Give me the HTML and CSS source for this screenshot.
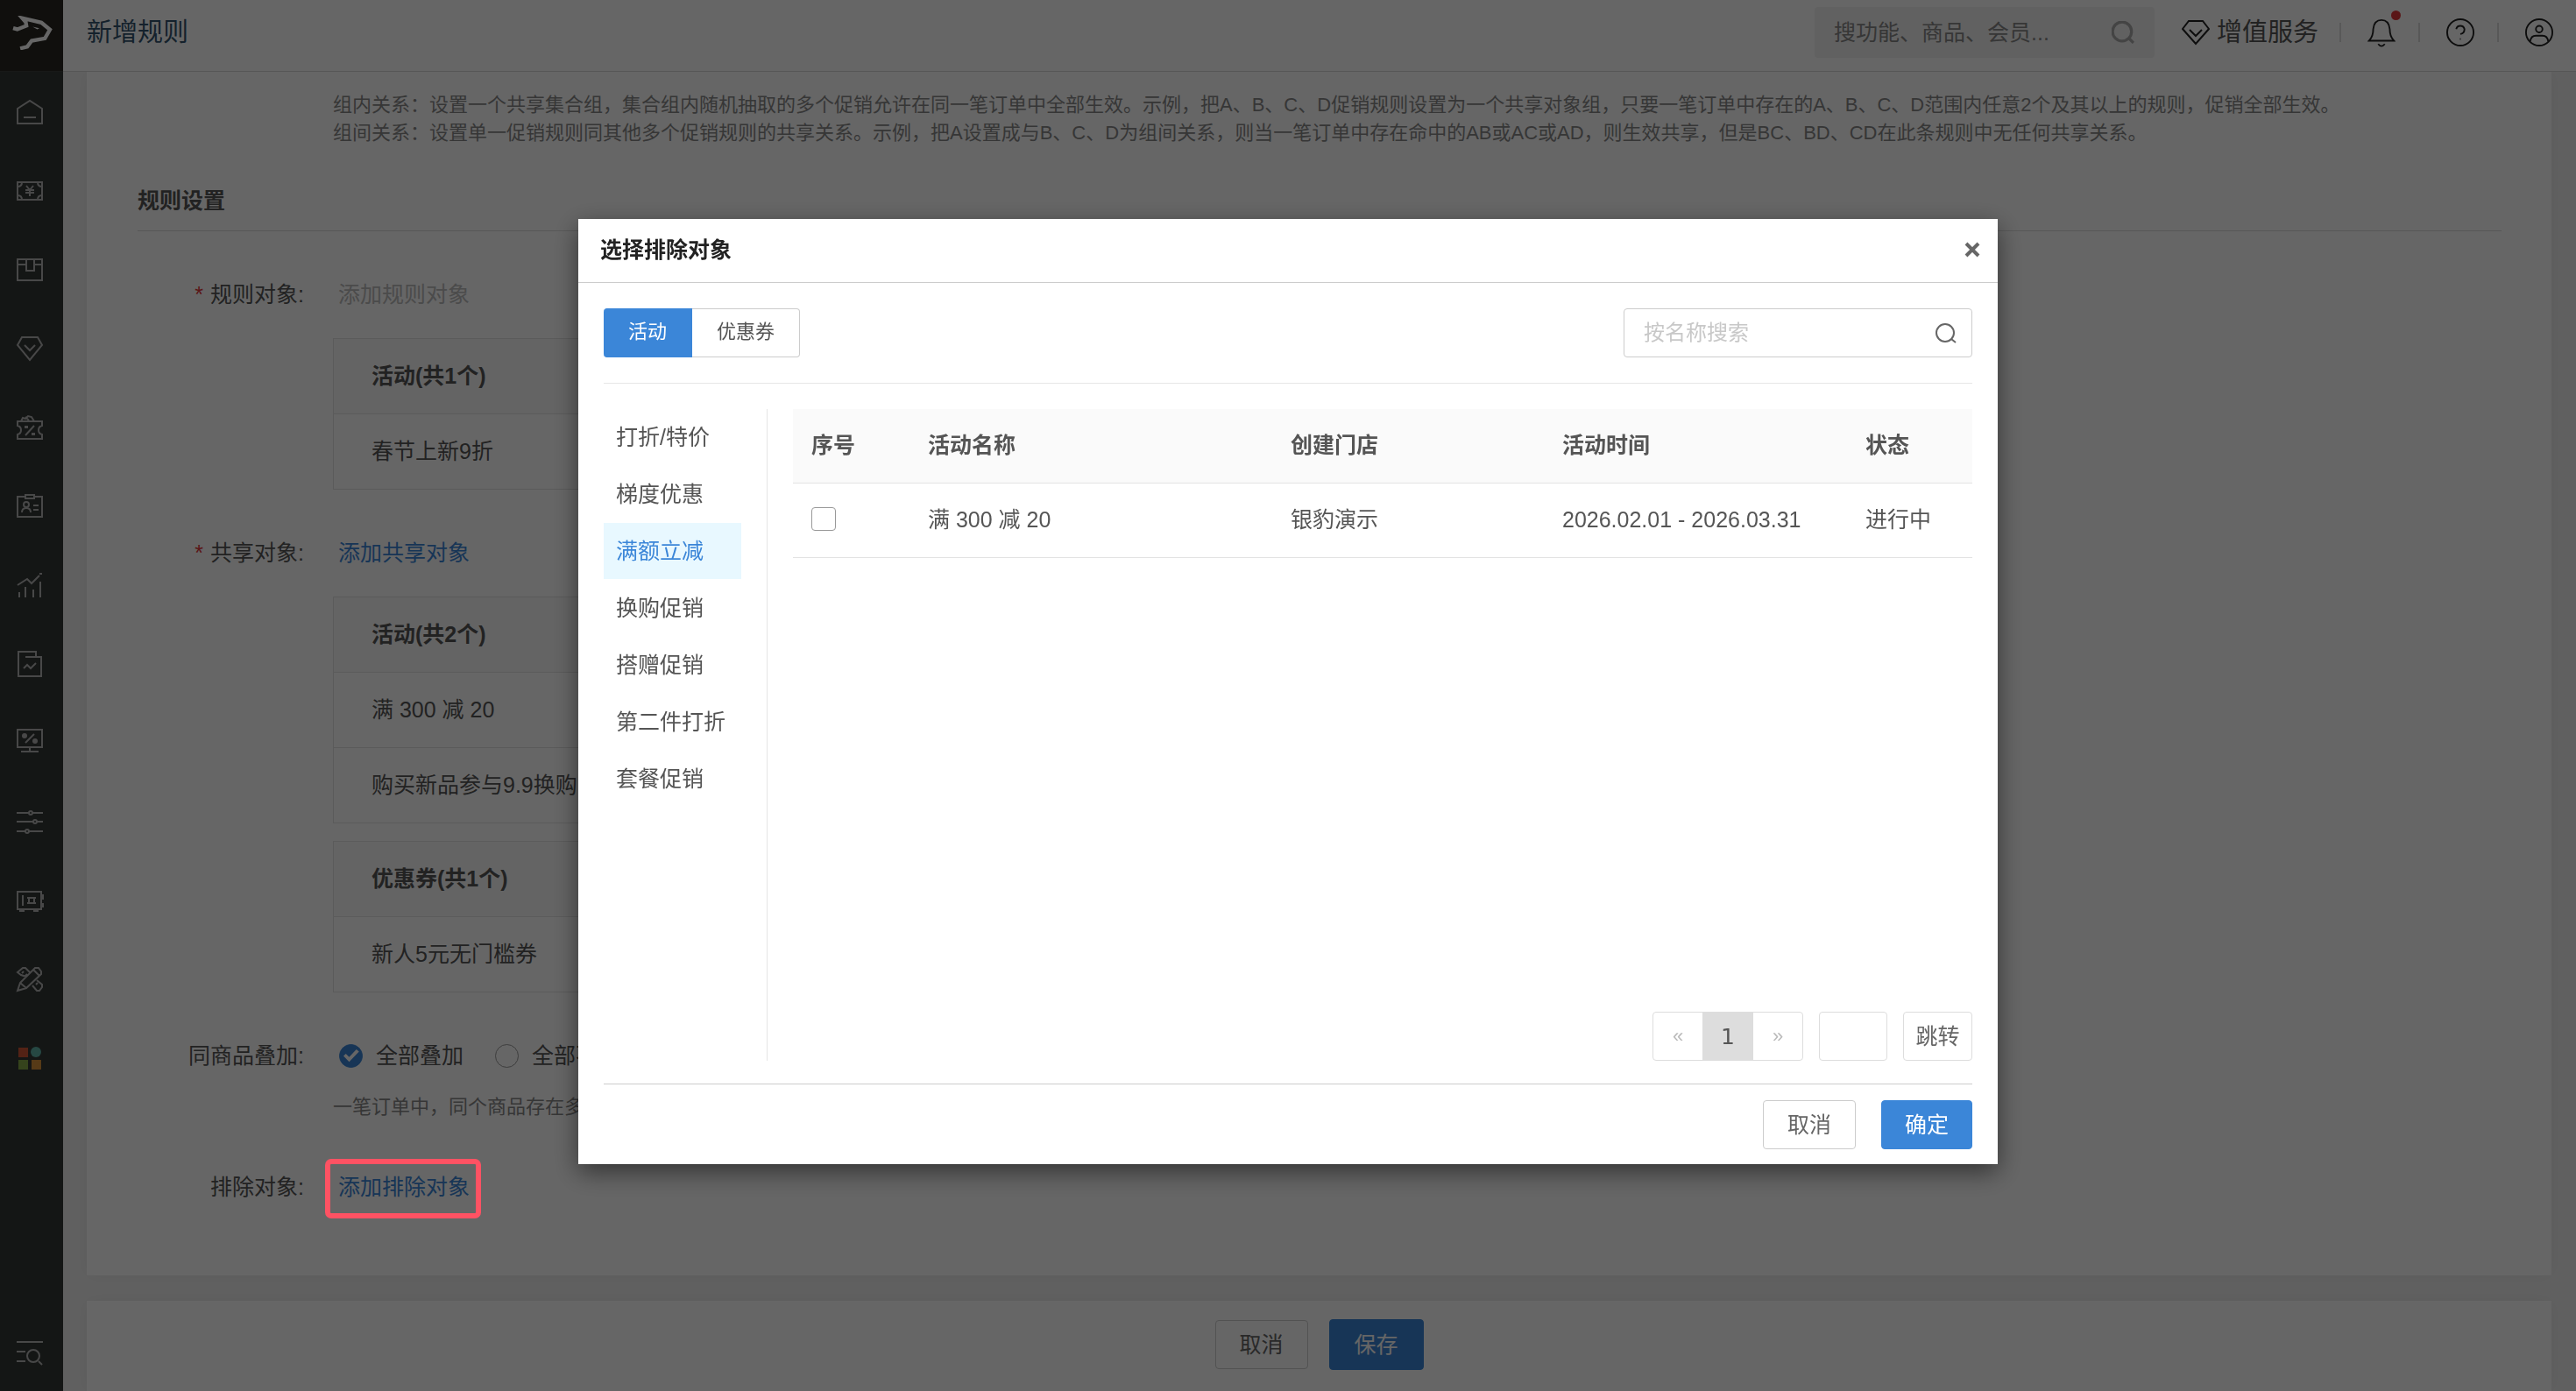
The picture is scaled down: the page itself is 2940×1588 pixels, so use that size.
FILE: index.html
```html
<!DOCTYPE html>
<html lang="zh-CN">
<head>
<meta charset="utf-8">
<title>新增规则</title>
<link rel="stylesheet" href="styles.css">
</head>
<body>
<div class="app">
  <nav class="sidebar" aria-label="主导航">
    <a class="logo" href="#" aria-label="首页">
      <svg viewBox="36 56 140 116" width="47" height="39"><path d="M42 98 56 102 87 90 85 78 73 64 138 79 167 103 150 133 105 141 90 161 66 167" fill="none" stroke="#fff" stroke-width="13"/><path d="M108 93 131 98 124 102Z" fill="#fff"/></svg>
    </a>
    <a class="side-link" href="#" aria-label="概览"><svg class="icon" viewBox="0 0 30 30"><path d="M1 28V11L15 2l14 9v17zM8 21h14"/></svg></a>
    <a class="side-link" href="#" aria-label="收银"><svg class="icon" viewBox="0 0 30 30"><path d="M1 5h28v20H1zM1 10q5 0 5-5M24 5q0 5 5 5M1 20q5 0 5 5M24 25q0-5 5-5M11 9l4 5 4-5M15 14v7M10 14h10M10 17h10"/></svg></a>
    <a class="side-link" href="#" aria-label="商品"><svg class="icon" viewBox="0 0 30 30"><path d="M1 3h28v24H1zM1 9h10M19 9h10M11 3v13h9V3"/></svg></a>
    <a class="side-link" href="#" aria-label="会员"><svg class="icon" viewBox="0 0 30 30"><path d="M6 2h18l5 9-14 17L1 11zM9 11l6 6 6-6"/></svg></a>
    <a class="side-link" href="#" aria-label="营销"><svg class="icon" viewBox="0 0 30 30"><path d="M1 8h28v5q-4 1-4 5t4 5v5H1v-5q4-1 4-5t-4-5zM5 8l2-4 3 1 3-3 4 1 3 5M10 3l4 4M10 24l10-11"/><path class="dot" d="M9 13h4v3H9zM17 21h4v3h-4z"/></svg></a>
    <a class="side-link" href="#" aria-label="员工"><svg class="icon" viewBox="0 0 30 30"><path d="M10 4H1v23h28V4h-9M10 2h10v4H10zM6 22q0-5 5-5t5 5M19 14h6M19 19h6"/><circle cx="11" cy="13" r="3"/></svg></a>
    <a class="side-link" href="#" aria-label="数据"><svg class="icon" viewBox="0 0 30 30"><path d="M1 15l11-7 5 5 9-9M26 2h3M3 23v6M10 17v12M19 20v9M27 11v18"/></svg></a>
    <a class="side-link" href="#" aria-label="报表"><svg class="icon" viewBox="0 0 30 30"><path d="M22 7V1H2v28h26V7H10M8 20l4-4 4 4 6-6"/></svg></a>
    <a class="side-link" href="#" aria-label="收银端"><svg class="icon" viewBox="0 0 30 30"><path d="M1 0h28v20H1zM15 20v4M5 25h20M10 15L20 5"/><circle class="dot" cx="9" cy="7" r="3"/><circle class="dot" cx="21" cy="13" r="3"/></svg></a>
    <a class="side-link" href="#" aria-label="设置"><svg class="icon" viewBox="0 0 30 30"><path d="M0 5h14M18 5h12M0 15h19M23 15h7M0 26h10M14 26h16"/><circle cx="16" cy="5" r="2"/><circle cx="21" cy="15" r="2"/><circle cx="12" cy="26" r="2"/></svg></a>
    <a class="side-link" href="#" aria-label="资金"><svg class="icon" viewBox="0 0 30 30"><path d="M1 5h27v20H1zM7 9v12M14 12h6v6h-6zM12 12h10M12 18h10M28 9h2v4h-2M28 19h2v4M4 25v2h4v-2M20 25v2h4v-2"/></svg></a>
    <a class="side-link" href="#" aria-label="工具"><svg class="icon" viewBox="0 0 30 30"><path d="M1 28l3-9L21 2h4l3 4v3L11 25zM4 19l7 6M19 4l7 7M11 12L5 10 1 7l6-5h3l5 5M8 6L6 8M12 9l-2 2M18 22l5 6h3l3-4v-3l-6-5M24 19l-2 2"/></svg></a>
    <a class="side-link" href="#" aria-label="应用"><svg width="30" height="30" viewBox="0 0 30 30"><path fill="#cf5536" d="M2 3h11v11H2z"/><circle cx="22" cy="8" r="6" fill="#5fb3a8"/><path fill="#86a948" d="M2 17h11v11H2z"/><path fill="#d6913a" d="M17 17h11v11H17z"/></svg></a>
    <a class="side-link side-search" href="#" aria-label="搜索菜单"><svg class="icon" viewBox="0 0 30 30"><path d="M0 3h30M0 14h10M0 25h10M25 25l4 4"/><circle cx="19" cy="19" r="7"/></svg></a>
  </nav>

  <div class="page">
    <header class="topbar">
      <h1 class="page-title">新增规则</h1>
      <div class="global-search">
        <input type="text" aria-label="全局搜索" placeholder="搜功能、商品、会员...">
        <svg class="search-icon" viewBox="0 0 24 24"><circle cx="11" cy="11" r="10"/><path d="M18 18l5 5"/></svg>
      </div>
      <a class="service" href="#">
        <svg class="top-icon" viewBox="0 0 32 32"><path d="M8 3h16l7 9-15 17L1 12zM9 13l7 7 7-7"/></svg>
        增值服务
      </a>
      <div class="top-actions">
        <button class="top-button" type="button" aria-label="通知">
          <svg class="top-icon" viewBox="0 0 32 36"><path d="M1 28q5-5 5-14Q7 3 16 3t10 11q0 9 5 14zM12 32q4 5 8 0"/></svg>
          <span class="badge"></span>
        </button>
        <button class="top-button" type="button" aria-label="帮助"><svg class="top-icon" viewBox="0 0 34 34"><circle cx="17" cy="17" r="16"/><path d="M12 13q1-4 5-4t5 4q0 5-5 6"/><path d="M17 24v2" stroke-width="1"/></svg></button>
        <button class="top-button" type="button" aria-label="账户"><svg class="top-icon" viewBox="0 0 34 34"><circle cx="17" cy="17" r="16"/><circle cx="17" cy="13" r="4"/><path d="M6 28q1-7 7-7h8q6 0 7 7"/></svg></button>
      </div>
    </header>

    <main class="content">
      <section class="card form-card">
        <p class="help">组内关系：设置一个共享集合组，集合组内随机抽取的多个促销允许在同一笔订单中全部生效。示例，把A、B、C、D促销规则设置为一个共享对象组，只要一笔订单中存在的A、B、C、D范围内任意2个及其以上的规则，促销全部生效。<br>组间关系：设置单一促销规则同其他多个促销规则的共享关系。示例，把A设置成与B、C、D为组间关系，则当一笔订单中存在命中的AB或AC或AD，则生效共享，但是BC、BD、CD在此条规则中无任何共享关系。</p>
        <h2 class="section-title">规则设置</h2>

        <div class="form-row">
          <div class="label"><span class="required">*</span>规则对象:</div>
          <div class="field">
            <a class="pick disabled" href="#">添加规则对象</a>
            <table class="targets">
              <thead><tr><th>活动(共1个)</th></tr></thead>
              <tbody><tr><td>春节上新9折</td></tr></tbody>
            </table>
          </div>
        </div>

        <div class="form-row">
          <div class="label"><span class="required">*</span>共享对象:</div>
          <div class="field">
            <a class="pick" href="#">添加共享对象</a>
            <table class="targets">
              <thead><tr><th>活动(共2个)</th></tr></thead>
              <tbody><tr><td>满 300 减 20</td></tr><tr><td>购买新品参与9.9换购</td></tr></tbody>
            </table>
            <table class="targets">
              <thead><tr><th>优惠券(共1个)</th></tr></thead>
              <tbody><tr><td>新人5元无门槛券</td></tr></tbody>
            </table>
          </div>
        </div>

        <div class="form-row">
          <div class="label">同商品叠加:</div>
          <div class="field">
            <div class="radios">
              <label class="radio"><input type="radio" name="stack" checked>全部叠加</label>
              <label class="radio"><input type="radio" name="stack">全部不叠加</label>
            </div>
            <p class="note">一笔订单中，同个商品存在多个</p>
          </div>
        </div>

        <div class="form-row">
          <div class="label">排除对象:</div>
          <div class="field">
            <a class="pick" href="#">添加排除对象<span class="highlight"></span></a>
          </div>
        </div>
      </section>

      <footer class="card actions">
        <button class="btn" type="button">取消</button>
        <button class="btn primary save" type="button">保存</button>
      </footer>
    </main>
  </div>
</div>

<div class="overlay">
  <div class="modal" role="dialog" aria-modal="true" aria-labelledby="modal-title">
    <header class="modal-head">
      <h2 id="modal-title">选择排除对象</h2>
      <button class="close" type="button" aria-label="关闭"><svg viewBox="0 0 18 18" width="18" height="18"><path d="M2 2l14 14M16 2L2 16" fill="none" stroke="#666" stroke-width="4"/></svg></button>
    </header>
    <div class="toolbar">
      <div class="tabs">
        <button class="tab active" type="button">活动</button>
        <button class="tab" type="button">优惠券</button>
      </div>
      <div class="name-search">
        <input type="text" aria-label="按名称搜索" placeholder="按名称搜索">
        <svg viewBox="0 0 24 24"><circle cx="11" cy="12" r="10"/><path d="M18 19l5 4"/></svg>
      </div>
    </div>
    <div class="modal-body">
      <nav class="types" aria-label="活动类型">
        <a href="#">打折/特价</a>
        <a href="#">梯度优惠</a>
        <a class="active" href="#">满额立减</a>
        <a href="#">换购促销</a>
        <a href="#">搭赠促销</a>
        <a href="#">第二件打折</a>
        <a href="#">套餐促销</a>
      </nav>
      <div class="results">
        <table class="list">
          <colgroup><col class="c-no"><col class="c-name"><col class="c-store"><col class="c-time"><col></colgroup>
          <thead><tr><th>序号</th><th>活动名称</th><th>创建门店</th><th>活动时间</th><th>状态</th></tr></thead>
          <tbody><tr><td><input type="checkbox" aria-label="选择 满 300 减 20"></td><td>满 300 减 20</td><td>银豹演示</td><td>2026.02.01 - 2026.03.31</td><td>进行中</td></tr></tbody>
        </table>
        <div class="pager">
          <div class="pages">
            <button type="button" aria-label="上一页">«</button>
            <button class="current" type="button">1</button>
            <button type="button" aria-label="下一页">»</button>
          </div>
          <input type="text" aria-label="页码">
          <button class="jump" type="button">跳转</button>
        </div>
      </div>
    </div>
    <footer class="modal-foot">
      <button class="btn" type="button">取消</button>
      <button class="btn primary" type="button">确定</button>
    </footer>
  </div>
</div>
</body>
</html>
```

FILE: styles.css
```css
* {
  box-sizing: border-box;
}

body {
  margin: 0;
  background: #f1f1f1;
  color: #555;
  font: 25px/40px "Liberation Sans", "Noto Sans CJK SC", sans-serif;
}

h1, h2, p {
  margin: 0;
}

a {
  color: inherit;
  text-decoration: none;
}

button, input {
  margin: 0;
  font: inherit;
  color: inherit;
}

button {
  padding: 0;
  border: 0;
  background: none;
}

table {
  border-collapse: collapse;
}

th {
  text-align: left;
}

.app {
  display: grid;
  grid-template-columns: 72px minmax(0, 1fr);
  min-height: 100vh;
}

/* sidebar */
.sidebar {
  display: flex;
  flex-direction: column;
  background: #333836;
}

.logo {
  display: flex;
  align-items: center;
  justify-content: center;
  height: 82px;
  padding-bottom: 6px;
  border-bottom: 1px solid #3c403e;
  background: #282622;
}

.side-link {
  display: flex;
  align-items: center;
  justify-content: center;
  height: 90px;
  padding: 2px 4px 0 0;
}

.side-search {
  margin-top: auto;
}

.icon {
  width: 30px;
  height: 30px;
  overflow: visible;
  fill: none;
  stroke: #b4b4b4;
  stroke-width: 2;
}

.icon .dot {
  fill: #b4b4b4;
  stroke: none;
}

/* top bar */
.topbar {
  display: flex;
  align-items: center;
  height: 82px;
  padding: 0 0 8px 27px;
  border-bottom: 1px solid #d8d8d8;
  background: #fff;
}

.page-title {
  margin-right: auto;
  color: #34536e;
  font-size: 29px;
  font-weight: 400;
}

.global-search {
  display: flex;
  align-items: center;
  width: 388px;
  height: 58px;
  padding: 0 23px 0 22px;
  border-radius: 4px;
  background: #f3f3f3;
}

.global-search input {
  flex: 1;
  min-width: 0;
  padding: 0;
  border: 0;
  background: none;
}

.global-search input::placeholder {
  color: #888;
}

.search-icon {
  width: 26px;
  height: 26px;
  fill: none;
  stroke: #aaa;
  stroke-width: 3;
}

.service {
  display: flex;
  align-items: center;
  gap: 8px;
  margin: 0 24px 0 31px;
  font-size: 29px;
}

.top-icon {
  width: 32px;
  height: 34px;
  fill: none;
  stroke: #222;
  stroke-width: 2;
}

.top-actions {
  display: flex;
}

.top-button {
  position: relative;
  display: flex;
  align-items: center;
  justify-content: center;
  width: 90px;
  height: 22px;
  padding-left: 4px;
  border-left: 2px solid #ddd;
}

.badge {
  position: absolute;
  top: -14px;
  right: 20px;
  width: 11px;
  height: 11px;
  border-radius: 50%;
  background: #e2383b;
}

/* form */
.content {
  padding: 0 28px 0 27px;
}

.card {
  background: #fff;
  box-shadow: 0 0 20px rgba(0, 0, 0, .05);
}

.page {
  display: flow-root;
}

.topbar {
  position: relative;
  z-index: 1;
}

.form-card {
  padding: 22px 57px 81px 58px;
}

.help {
  padding-left: 223px;
  color: #888;
  font-size: 22px;
  line-height: 32px;
}

.section-title {
  margin-top: 41px;
  padding-bottom: 14px;
  border-bottom: 1px solid #ddd;
  font-size: 25px;
}

.form-row {
  display: grid;
  grid-template-columns: 190px minmax(0, 1fr);
  gap: 33px;
  margin-top: 52px;
}

.label {
  text-align: right;
}

.required {
  margin-right: 8px;
  color: #e2383b;
}

.pick {
  position: relative;
  display: inline-block;
  margin-left: 6px;
  vertical-align: top;
  color: #3b86d8;
}

.pick.disabled {
  color: #bbb;
}

.highlight {
  position: absolute;
  z-index: 20;
  inset: -12px -13px -16px -15px;
  border: 6px solid #ff5263;
  border-radius: 7px;
}

.targets {
  width: 1200px;
  margin-top: 30px;
  border: 1px solid #e3e3e3;
}

.targets + .targets {
  margin-top: 20px;
}

.targets th,
.targets td {
  height: 86px;
  padding: 0 43px 2px;
  border-top: 1px solid #e3e3e3;
}

.targets th {
  background: #fafafa;
}

.radios {
  display: flex;
  gap: 36px;
  padding-left: 7px;
}

.radio {
  display: flex;
  align-items: center;
  gap: 15px;
}

.radio input {
  appearance: none;
  width: 27px;
  height: 27px;
  border: 1px solid #999;
  border-radius: 50%;
}

.radio input:checked {
  border-color: #3b86d8;
  background: #3b86d8;
}

.radio input:checked::before {
  content: "";
  display: block;
  height: 100%;
  background: #fff;
  clip-path: polygon(16% 52%, 27% 42%, 42% 57%, 75% 22%, 87% 32%, 42% 79%);
}

.note {
  margin-top: 20px;
  color: #888;
  font-size: 22px;
  line-height: 38px;
}

.actions {
  display: flex;
  justify-content: center;
  align-items: center;
  gap: 24px;
  margin-top: 29px;
  padding: 21px 0 24px;
}

.btn {
  width: 106px;
  height: 56px;
  border: 1px solid #ccc;
  border-radius: 4px;
  background: #fff;
  color: #666;
}

.btn.primary {
  width: 104px;
  border-color: #3b86d8;
  background: #3b86d8;
  color: #fff;
}

.btn.save {
  width: 108px;
  height: 58px;
}

/* dialog */
.overlay {
  position: fixed;
  z-index: 10;
  inset: 0;
  padding-top: 250px;
  background: rgba(0, 0, 0, .6);
}

.modal {
  width: 1620px;
  max-width: 96%;
  margin: 0 auto;
  background: #fff;
  box-shadow: 0 9px 27px rgba(0, 0, 0, .5);
}

.modal-head {
  display: flex;
  align-items: center;
  justify-content: space-between;
  height: 73px;
  padding: 0 20px 2px 25px;
  border-bottom: 1px solid #ccc;
  color: #222;
}

.modal-head h2 {
  font-size: 25px;
}

.close {
  display: flex;
  padding: 0;
}

.toolbar {
  display: flex;
  justify-content: space-between;
  margin: 0 29px;
  padding: 29px 0;
  border-bottom: 1px solid #e6e6e6;
}

.tabs {
  display: flex;
}

.tab {
  height: 56px;
  padding: 0 28px 2px;
  border: 1px solid #ccc;
  border-left: 0;
  border-radius: 0 4px 4px 0;
  font-size: 22px;
}

.tab.active {
  border-color: #3b86d8;
  border-radius: 4px 0 0 4px;
  background: #3b86d8;
  color: #fff;
}

.name-search {
  display: flex;
  align-items: center;
  width: 398px;
  height: 56px;
  padding: 0 17px 0 22px;
  border: 1px solid #ccc;
  border-radius: 4px;
}

.name-search input {
  flex: 1;
  min-width: 0;
  padding: 0;
  border: 0;
  font-size: 24px;
}

.name-search input::placeholder {
  color: #c8c8c8;
}

.name-search svg {
  width: 24px;
  height: 24px;
  fill: none;
  stroke: #666;
  stroke-width: 2;
}

.modal-body {
  display: grid;
  grid-template-columns: 187px minmax(0, 1fr);
  gap: 29px;
  min-height: 800px;
  margin: 0 29px;
  padding: 29px 0 26px;
  border-bottom: 1px solid #ccc;
}

.types {
  display: flex;
  flex-direction: column;
  gap: 1px;
  padding-right: 29px;
  border-right: 1px solid #e6e6e6;
}

.types a {
  padding: 12px 14px;
}

.types .active {
  background: #e8f8ff;
  color: #3b86d8;
}

.results {
  display: flex;
  flex-direction: column;
  justify-content: space-between;
}

.list {
  width: 100%;
  table-layout: fixed;
}

.c-no { width: 133px; }
.c-name { width: 414px; }
.c-store { width: 310px; }
.c-time { width: 346px; }

.list th,
.list td {
  height: 85px;
  padding: 0 0 2px 21px;
  border-bottom: 1px solid #e3e3e3;
}

.list th {
  height: 84px;
  background: #fafafa;
}

.list input {
  appearance: none;
  display: block;
  width: 28px;
  height: 27px;
  border: 1px solid #999;
  border-radius: 4px;
  background: #fff;
}

.pager {
  display: flex;
  justify-content: flex-end;
  gap: 18px;
}

.pages {
  display: flex;
  border: 1px solid #ddd;
  border-radius: 4px;
}

.pages button {
  width: 56px;
  height: 54px;
  color: #bbb;
  font-size: 22px;
}

.pages .current {
  width: 58px;
  background: #ddd;
  color: #555;
  font: 25px "DejaVu Sans", sans-serif;
}

.pager input {
  width: 78px;
  height: 56px;
  padding: 0 10px;
  border: 1px solid #ddd;
  border-radius: 4px;
}

.jump {
  width: 79px;
  height: 56px;
  border: 1px solid #ddd;
  border-radius: 4px;
  color: #666;
}

.modal-foot {
  display: flex;
  justify-content: flex-end;
  gap: 29px;
  padding: 18px 29px 17px;
}
```
